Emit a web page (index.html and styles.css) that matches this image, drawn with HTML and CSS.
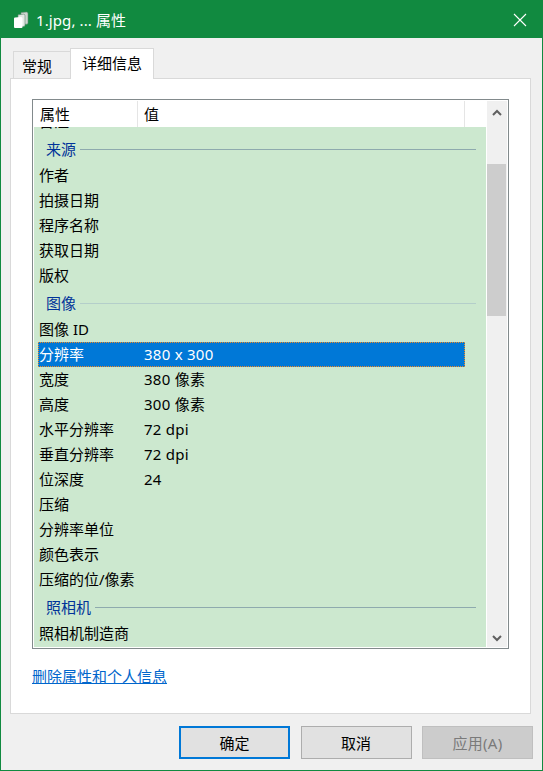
FILE: index.html
```html
<!DOCTYPE html>
<html lang="zh-CN">
<head>
    <meta charset="UTF-8">
    <title>1.jpg, ... 属性</title>
    <link rel="stylesheet" href="styles.css">
</head>
<body>
    <div class="window">
        <div class="titlebar">
            <svg class="fileicon" width="16" height="18" viewBox="0 0 16 18">
                <path d="M8 1.500l5.500-.5q1.500 0 1.500 1.500v9.500q0 1-1 1.200H8z" fill="#cfd6d2" stroke="#5f8a70" stroke-width=".6"/>
                <path d="M5 3.800l5.500-.6q1.500 0 1.500 1.500v9.500q0 1-1 1.200H5z" fill="#e4e9e6" stroke="#5f8a70" stroke-width=".6"/>
                <path d="M2 6.500l6-.6q1.500 0 1.500 1.500V16q0 1-1 1H2q-1 0-1-1V7.500q0-1 1-1z" fill="#fff"/>
            </svg>
            <span class="titletext">1.jpg, ... 属性</span>
            <svg class="closeicon" width="14" height="14" viewBox="0 0 14 14">
                <path d="M1 1l12 12M13 1L1 13" stroke="#fff" stroke-width="1.1" fill="none"/>
            </svg>
        </div>

        <div class="content">
            <div class="tabs">
                <div class="tab">常规</div>
                <div class="tab active">详细信息</div>
            </div>

            <div class="panel">
                <div class="list">
                    <div class="listmain">
                        <div class="listhead">
                            <div class="headcell first">属性</div>
                            <div class="headcell second">值</div>
                        </div>
                        <div class="listbody">
                            <div class="row"><span class="name">备注</span></div>

                            <div class="group"><span>来源</span><i></i></div>
                            <div class="row"><span class="name">作者</span></div>
                            <div class="row"><span class="name">拍摄日期</span></div>
                            <div class="row"><span class="name">程序名称</span></div>
                            <div class="row"><span class="name">获取日期</span></div>
                            <div class="row"><span class="name">版权</span></div>

                            <div class="group light"><span>图像</span><i></i></div>
                            <div class="row"><span class="name">图像 ID</span></div>
                            <div class="row selected"><span class="name">分辨率</span><span class="val">380 x 300</span></div>
                            <div class="row"><span class="name">宽度</span><span class="val">380 像素</span></div>
                            <div class="row"><span class="name">高度</span><span class="val">300 像素</span></div>
                            <div class="row"><span class="name">水平分辨率</span><span class="val">72 dpi</span></div>
                            <div class="row"><span class="name">垂直分辨率</span><span class="val">72 dpi</span></div>
                            <div class="row"><span class="name">位深度</span><span class="val">24</span></div>
                            <div class="row"><span class="name">压缩</span></div>
                            <div class="row"><span class="name">分辨率单位</span></div>
                            <div class="row"><span class="name">颜色表示</span></div>
                            <div class="row"><span class="name">压缩的位/像素</span></div>

                            <div class="group"><span>照相机</span><i></i></div>
                            <div class="row"><span class="name">照相机制造商</span></div>
                        </div>
                    </div>
                    <div class="scrollbar">
                        <div class="arrow">
                            <svg width="10" height="7" viewBox="0 0 10 7"><path d="M1 6l4-4 4 4" stroke="#606060" stroke-width="2" fill="none"/></svg>
                        </div>
                        <div class="track"><div class="thumb"></div></div>
                        <div class="arrow">
                            <svg width="10" height="7" viewBox="0 0 10 7"><path d="M1 1l4 4 4-4" stroke="#606060" stroke-width="2" fill="none"/></svg>
                        </div>
                    </div>
                </div>
                <a class="removelink" href="#">删除属性和个人信息</a>
            </div>

            <div class="buttons">
                <button class="btn default">确定</button>
                <button class="btn">取消</button>
                <button class="btn disabled">应用(A)</button>
            </div>
        </div>
    </div>
</body>
</html>
```

FILE: styles.css
```css
*{
    margin: 0;
    padding: 0;
    box-sizing: border-box;
}
body{
    font-family: "Noto Sans", "Noto Sans CJK SC", sans-serif;
    font-size: 15px;
    color: #000;
    background: #f0f0f0;
}
.window{
    width: 543px;
    height: 771px;
    border: 1px solid #118a40;
    display: flex;
    flex-direction: column;
}
.titlebar{
    height: 37px;
    flex: none;
    background: #118a40;
    color: #fff;
    display: flex;
    align-items: center;
    padding-left: 12px;
    padding-right: 15px;
}
.fileicon{
    margin-right: 7px;
}
.titletext{
    flex: 1;
    line-height: 20px;
    letter-spacing: 0.1px;
}
.content{
    flex: 1;
    padding: 10px 9px 0;
    display: flex;
    flex-direction: column;
}

/* tabs */
.tabs{
    display: flex;
    align-items: flex-end;
    height: 30px;
    padding-left: 3px;
    position: relative;
    z-index: 1;
}
.tab{
    width: 57px;
    height: 27px;
    line-height: 29px;
    padding-left: 8px;
    background: #f0f0f0;
    border: 1px solid #d9d9d9;
    border-bottom: 0;
    border-right: 0;
}
.tab.active{
    width: 84px;
    height: 31px;
    line-height: 29px;
    padding-left: 11px;
    background: #fff;
    border-right: 1px solid #d9d9d9;
    margin-bottom: -1px;
}
.panel{
    height: 636px;
    width: 521px;
    background: #fff;
    border: 1px solid #d9d9d9;
    padding: 20px 21px 0;
}

/* details list */
.list{
    width: 477px;
    height: 550px;
    border: 1px solid #828a8c;
    padding: 1px;
    display: flex;
    background: #fff;
}
.listmain{
    width: 452px;
    flex: none;
    display: flex;
    flex-direction: column;
}
.listhead{
    height: 26px;
    flex: none;
    display: flex;
    line-height: 27px;
}
.headcell{
    padding-left: 6px;
    border-right: 1px solid #e5e5e5;
}
.headcell.first{
    width: 104px;
}
.headcell.second{
    width: 327px;
}
.listbody{
    flex: 1;
    background: #cce8cf;
    overflow: hidden;
}
.row{
    height: 25px;
    line-height: 25px;
    margin-left: 4px;
    width: 427px;
    padding-left: 1px;
    display: flex;
    white-space: nowrap;
}
.row:first-child{
    margin-top: -18px;
}
.name{
    width: 105px;
    flex: none;
}
.val{
    letter-spacing: 0.25px;
}
.row.selected{
    background: #0078d7;
    color: #fff;
    outline: 1px dotted #f08a24;
    outline-offset: -1px;
}
.group{
    height: 29px;
    padding: 0 10px 0 12px;
    display: flex;
    align-items: center;
    color: #003399;
}
.group i{
    flex: 1;
    height: 1px;
    background: #8eaaae;
    margin-left: 4px;
    margin-top: 2px;
}
.group.light i{
    background: #b4ceca;
}

/* scrollbar */
.scrollbar{
    width: 20px;
    margin-left: 1px;
    background: #f0f0f0;
    display: flex;
    flex-direction: column;
}
.arrow{
    height: 17px;
    flex: none;
    display: flex;
    align-items: center;
    justify-content: center;
    margin-top: 3px;
}
.track{
    flex: 1;
    padding-top: 43px;
}
.thumb{
    height: 152px;
    margin-right: 1px;
    background: #cdcdcd;
}
.removelink{
    display: block;
    width: max-content;
    margin-top: 17px;
    line-height: 20px;
    color: #0066cc;
}

/* bottom buttons */
.buttons{
    display: flex;
    justify-content: flex-end;
    gap: 10.5px;
    margin-top: 12px;
}
.btn{
    width: 111px;
    height: 33px;
    font: inherit;
    background: #e1e1e1;
    border: 1px solid #adadad;
    color: #000;
}
.btn.default{
    border: 2px solid #0078d7;
}
.btn.disabled{
    background: #cccccc;
    border-color: #bfbfbf;
    color: #7a7a7a;
    letter-spacing: 0.3px;
}
```
